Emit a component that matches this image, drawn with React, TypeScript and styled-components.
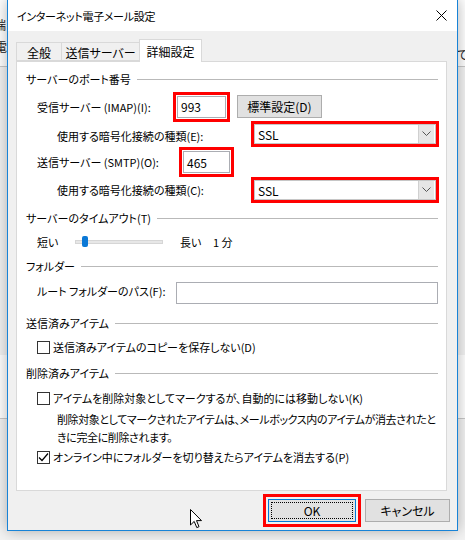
import React from 'react';
import styled, { createGlobalStyle } from 'styled-components';

const GlobalStyle = createGlobalStyle`
  html, body {
    margin: 0;
    padding: 0;
  }
  body {
    width: 465px;
    height: 540px;
    overflow: hidden;
    background: #fff;
    font-family: "Noto Sans CJK JP", "Noto Sans", sans-serif;
    font-size: 11px;
    color: #000;
    font-feature-settings: "palt";
  }
`;

const Desktop = styled.div`
  position: relative;
  width: 465px;
  height: 540px;
  overflow: hidden;
  background: #fff;
`;

/* window behind the dialog: only its edges show */
const BackWindow = styled.div`
  position: absolute;
  left: 0;
  top: 0;
  width: 465px;
  height: 540px;
  background: #fff;
`;

const BackBand = styled.div<{ $top: number; $h: number }>`
  position: absolute;
  left: 0;
  right: 0;
  top: ${p => p.$top}px;
  height: ${p => p.$h}px;
  background: #f3f3f3;
  border-top: 1px solid #c8c8c8;
`;

const Fragment = styled.span<{ $x: number; $y: number }>`
  position: absolute;
  left: ${p => p.$x}px;
  top: ${p => p.$y}px;
  font-size: 12px;
  line-height: 14px;
  color: #222;
`;

const Dialog = styled.div`
  position: absolute;
  left: 7px;
  top: -1px;
  width: 451px;
  height: 532px;
  box-sizing: border-box;
  border: 1px solid #1883d7;
  background: #f0f0f0;
  box-shadow: 0 0 14px rgba(0, 0, 0, 0.3);
  display: flex;
  flex-direction: column;
`;

const TitleBar = styled.div`
  height: 31px;
  flex-shrink: 0;
  background: #fff;
  display: flex;
  align-items: center;
  justify-content: space-between;
  padding: 0 10px 0 9px;
`;

const Title = styled.span`
  white-space: nowrap;
  font-size: 11px;
  letter-spacing: -0.3px;
`;

const Body = styled.div`
  display: flex;
  flex-direction: column;
  padding: 8px 10px 0 8px;
`;

const TabRow = styled.div`
  display: flex;
  align-items: flex-end;
  height: 22px;
  position: relative;
  z-index: 1;
`;

const Tab = styled.div<{ $w: number; $active?: boolean }>`
  box-sizing: border-box;
  width: ${p => p.$w}px;
  height: ${p => (p.$active ? 23 : 19)}px;
  margin-bottom: ${p => (p.$active ? -1 : 0)}px;
  margin-left: ${p => (p.$active ? -1 : 0)}px;
  border: 1px solid #d9d9d9;
  border-bottom: ${p => (p.$active ? 'none' : '1px solid #d9d9d9')};
  border-left: ${p => (p.$active ? '1px solid #d9d9d9' : 'none')};
  background: ${p => (p.$active ? '#fff' : '#f0f0f0')};
  display: flex;
  align-items: center;
  justify-content: center;
  padding-top: ${p => (p.$active ? 0 : 1)}px;
  white-space: nowrap;
  font-size: 12px;
  &:first-child {
    border-left: 1px solid #d9d9d9;
  }
`;

const Panel = styled.div`
  box-sizing: border-box;
  height: 430px;
  background: #fff;
  border: 1px solid #d9d9d9;
  padding: 9px 8px 0 9px;
  display: flex;
  flex-direction: column;
`;

const GroupHeader = styled.div<{ $mt: number }>`
  display: flex;
  align-items: center;
  height: 16px;
  margin-top: ${p => p.$mt}px;
  white-space: nowrap;
  &::after {
    content: '';
    flex: 1;
    height: 1px;
    margin-left: 6px;
    background: #b9b9b9;
  }
`;

const Row = styled.div<{ $mt: number; $h: number; $indent: number }>`
  display: flex;
  align-items: center;
  height: ${p => p.$h}px;
  margin-top: ${p => p.$mt}px;
  padding-left: ${p => p.$indent}px;
  white-space: nowrap;
`;

const Label = styled.span<{ $w?: number; $dy?: number }>`
  flex-shrink: 0;
  width: ${p => (p.$w ? `${p.$w}px` : 'auto')};
  position: relative;
  top: ${p => p.$dy ?? 0}px;
`;

const TextBox = styled.div<{ $w: number; $mark?: boolean; $flex?: boolean }>`
  box-sizing: border-box;
  width: ${p => (p.$flex ? 'auto' : `${p.$w}px`)};
  flex: ${p => (p.$flex ? 1 : 'none')};
  height: 22px;
  border: 1px solid #abadb3;
  background: #fff;
  display: flex;
  align-items: center;
  padding-left: 3px;
  font-size: 12px;
  outline: ${p => (p.$mark ? '3px solid #ff0000' : 'none')};
  outline-offset: 1px;
`;

const Select = styled.div<{ $w: number }>`
  box-sizing: border-box;
  width: ${p => p.$w}px;
  height: 20px;
  border: 1px solid #c6c6c6;
  background: #fff;
  display: flex;
  align-items: center;
  padding-left: 3px;
  font-size: 12px;
  outline: 3px solid #ff0000;
  outline-offset: 0;
`;

const SelectValue = styled.span`
  flex: 1;
`;

const DropButton = styled.div`
  box-sizing: border-box;
  width: 16px;
  height: 18px;
  margin-right: 1px;
  background: #e6e6e6;
  border-left: 1px solid #d0d0d0;
  display: flex;
  align-items: center;
  justify-content: center;
`;

const PushButton = styled.button<{ $w: number; $ml?: number; $focus?: boolean }>`
  box-sizing: border-box;
  width: ${p => p.$w}px;
  height: 23px;
  margin-left: ${p => p.$ml ?? 0}px;
  padding: 2px;
  font: inherit;
  font-size: 12px;
  font-feature-settings: "palt";
  color: #000;
  background: #e1e1e1;
  border: 1px solid ${p => (p.$focus ? '#0078d7' : '#adadad')};
  outline: ${p => (p.$focus ? '3px solid #ff0000' : 'none')};
  outline-offset: 2px;
  display: flex;
`;

const FocusRect = styled.span<{ $on?: boolean }>`
  flex: 1;
  display: flex;
  align-items: center;
  justify-content: center;
  border: 1px dotted ${p => (p.$on ? '#000' : 'transparent')};
`;

const Track = styled.div`
  position: relative;
  box-sizing: border-box;
  width: 88px;
  height: 4px;
  background: #e7e7e7;
  border: 1px solid #d6d6d6;
  margin-right: 17px;
`;

const Thumb = styled.div`
  position: absolute;
  left: 6px;
  top: -5px;
  width: 6px;
  height: 11px;
  border-radius: 2px;
  background: #0a78d6;
`;

const Check = styled.div`
  box-sizing: border-box;
  width: 13px;
  height: 13px;
  flex-shrink: 0;
  border: 1px solid #333;
  background: #fff;
  margin-right: 3px;
  display: flex;
  align-items: center;
  justify-content: center;
`;

const Note = styled.div<{ $mt: number }>`
  margin-top: ${p => p.$mt}px;
  padding-left: 31px;
  line-height: 18px;
  letter-spacing: -0.4px;
  white-space: nowrap;
`;

const Footer = styled.div`
  display: flex;
  justify-content: flex-end;
  gap: 9px;
  margin-top: 8px;
  margin-right: -3px;
`;

const Cursor = styled.svg`
  position: absolute;
  left: 190px;
  top: 509px;
`;

const CloseIcon = () => (
  <svg width="11" height="11" viewBox="0 0 11 11">
    <path d="M0.5 0.5 L10.5 10.5 M10.5 0.5 L0.5 10.5" stroke="#000" strokeWidth="1" />
  </svg>
);

const Chevron = () => (
  <svg width="9" height="6" viewBox="0 0 9 6">
    <path d="M0.5 0.5 L4.5 4.5 L8.5 0.5" stroke="#555" strokeWidth="1" fill="none" />
  </svg>
);

const Tick = () => (
  <svg width="11" height="11" viewBox="0 0 11 11">
    <path d="M1 5.5 L4 8.5 L10 1.5" stroke="#000" strokeWidth="1.2" fill="none" />
  </svg>
);

const CheckRow = ({ mt, checked, children }: { mt: number; checked?: boolean; children: React.ReactNode }) => (
  <Row $mt={mt} $h={16} $indent={11}>
    <Check>{checked && <Tick />}</Check>
    <span>{children}</span>
  </Row>
);

export default function App() {
  return (
    <Desktop>
      <GlobalStyle />
      <BackWindow>
        <Fragment $x={-6} $y={18}>端</Fragment>
        <Fragment $x={-5} $y={40}>電</Fragment>
        <Fragment $x={-7} $y={73}>ー</Fragment>
        <Fragment $x={-5} $y={100}>カ</Fragment>
        <Fragment $x={-6} $y={124}>送</Fragment>
        <Fragment $x={-6} $y={150}>送</Fragment>
        <Fragment $x={-7} $y={185}>ー</Fragment>
        <Fragment $x={-5} $y={203}>カ</Fragment>
        <Fragment $x={-6} $y={230}>フ</Fragment>
        <Fragment $x={-6} $y={295}>□</Fragment>
        <Fragment $x={457} $y={48}>て</Fragment>
        <BackBand $top={66} $h={288} />
        <BackBand $top={418} $h={122} />
      </BackWindow>

      <Dialog>
        <TitleBar>
          <Title>インターネット電子メール設定</Title>
          <CloseIcon />
        </TitleBar>
        <Body>
          <TabRow>
            <Tab $w={46}>全般</Tab>
            <Tab $w={78}>送信サーバー</Tab>
            <Tab $w={63} $active>詳細設定</Tab>
          </TabRow>
          <Panel>
            <GroupHeader $mt={0}>サーバーのポート番号</GroupHeader>
            <Row $mt={8} $h={23} $indent={11}>
              <Label $w={140}>受信サーバー (IMAP)(I):</Label>
              <TextBox $w={49} $mark>993</TextBox>
              <PushButton $w={85} $ml={11}>
                <FocusRect>標準設定(D)</FocusRect>
              </PushButton>
            </Row>
            <Row $mt={6} $h={20} $indent={31}>
              <Label $w={197} $dy={2}>使用する暗号化接続の種類(E):</Label>
              <Select $w={182}>
                <SelectValue>SSL</SelectValue>
                <DropButton><Chevron /></DropButton>
              </Select>
            </Row>
            <Row $mt={7} $h={22} $indent={11}>
              <Label $w={146}>送信サーバー (SMTP)(O):</Label>
              <TextBox $w={47} $mark>465</TextBox>
            </Row>
            <Row $mt={7} $h={20} $indent={31}>
              <Label $w={197}>使用する暗号化接続の種類(C):</Label>
              <Select $w={182}>
                <SelectValue>SSL</SelectValue>
                <DropButton><Chevron /></DropButton>
              </Select>
            </Row>

            <GroupHeader $mt={10}>サーバーのタイムアウト(T)</GroupHeader>
            <Row $mt={6} $h={20} $indent={11}>
              <Label $w={38}>短い</Label>
              <Track><Thumb /></Track>
              <Label $w={33}>長い</Label>
              <Label>1 分</Label>
            </Row>

            <GroupHeader $mt={6}>フォルダー</GroupHeader>
            <Row $mt={8} $h={22} $indent={11}>
              <Label $w={139} $dy={-2}>ルート フォルダーのパス(F):</Label>
              <TextBox $w={0} $flex />
            </Row>

            <GroupHeader $mt={11}>送信済みアイテム</GroupHeader>
            <CheckRow mt={8}>送信済みアイテムのコピーを保存しない(D)</CheckRow>

            <GroupHeader $mt={10}>削除済みアイテム</GroupHeader>
            <CheckRow mt={9}>アイテムを削除対象としてマークするが、自動的には移動しない(K)</CheckRow>
            <Note $mt={4}>
              削除対象としてマークされたアイテムは、メールボックス内のアイテムが消去されたと
              <br />
              きに完全に削除されます。
            </Note>
            <CheckRow mt={3} checked>オンライン中にフォルダーを切り替えたらアイテムを消去する(P)</CheckRow>
          </Panel>
          <Footer>
            <PushButton $w={88} $focus>
              <FocusRect $on>OK</FocusRect>
            </PushButton>
            <PushButton $w={85}>
              <FocusRect>キャンセル</FocusRect>
            </PushButton>
          </Footer>
        </Body>
      </Dialog>

      <Cursor width="13" height="20" viewBox="0 0 13 20">
        <path
          d="M0.5 0.5 L0.5 16 L4.2 12.4 L6.8 18.6 L9 17.7 L6.5 11.6 L11.5 11.6 Z"
          fill="#fff"
          stroke="#000"
          strokeWidth="1"
          strokeLinejoin="round"
        />
      </Cursor>
    </Desktop>
  );
}
